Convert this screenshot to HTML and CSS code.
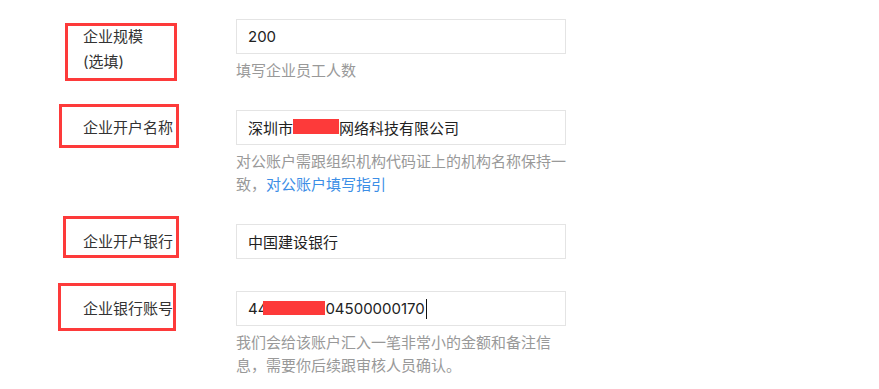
FILE: index.html
```html
<!DOCTYPE html>
<html lang="zh-CN">
<head>
<meta charset="utf-8">
<title>企业信息</title>
<link rel="stylesheet" href="styles.css">
</head>
<body>
<div class="form">
  <div class="row">
    <div class="label">企业规模<br>(选填)</div>
    <div class="field">
      <div class="input">200</div>
      <div class="hint">填写企业员工人数</div>
    </div>
    <div class="mark mark-1"></div>
  </div>

  <div class="row">
    <div class="label">企业开户名称</div>
    <div class="field">
      <div class="input">深圳市<span class="redact redact-name"></span>网络科技有限公司</div>
      <div class="hint">对公账户需跟组织机构代码证上的机构名称保持一致，<a class="link" href="#">对公账户填写指引</a></div>
    </div>
    <div class="mark mark-2"></div>
  </div>

  <div class="row row-nohint">
    <div class="label">企业开户银行</div>
    <div class="field">
      <div class="input">中国建设银行</div>
    </div>
    <div class="mark mark-3"></div>
  </div>

  <div class="row">
    <div class="label">企业银行账号</div>
    <div class="field">
      <div class="input">44<span class="redact redact-num"></span>04500000170<span class="caret"></span></div>
      <div class="hint">我们会给该账户汇入一笔非常小的金额和备注信息，需要你后续跟审核人员确认。</div>
    </div>
    <div class="mark mark-4"></div>
  </div>
</div>
</body>
</html>
```

FILE: styles.css
```css
html, body {
  margin: 0;
  padding: 0;
  background: #ffffff;
}

body {
  font-family: "Inter", "Noto Sans CJK SC", sans-serif;
  font-size: 15px;
  color: #333333;
}

.form {
  padding-top: 19px;
}

.row {
  position: relative;
  display: flex;
  align-items: flex-start;
  margin-bottom: 28px;
}

.row-nohint {
  margin-bottom: 32px;
}

.label {
  box-sizing: border-box;
  width: 236px;
  padding-left: 83px;
  padding-top: 5px;
  line-height: 25px;
  color: #333333;
  white-space: nowrap;
}

.field {
  width: 330px;
}

.input {
  box-sizing: border-box;
  height: 35px;
  border: 1px solid #e4e4e4;
  padding: 0 11px;
  display: flex;
  align-items: center;
  color: #222222;
  white-space: nowrap;
}

.redact {
  display: inline-block;
  background: #fd3a3a;
}

.redact-name {
  width: 46px;
  height: 15px;
  margin-top: -2px;
}

.redact-num {
  width: 62px;
  height: 14px;
  margin-left: -4px;
  margin-top: -1px;
}

.caret {
  display: inline-block;
  width: 1px;
  height: 20px;
  background: #111111;
  margin-left: 1px;
}

.hint {
  margin-top: 5px;
  line-height: 23px;
  color: #999999;
  width: 331px;
}

.link {
  color: #3c8ee6;
  text-decoration: none;
}

.mark {
  position: absolute;
  box-sizing: border-box;
  border: 3px solid #fd3a3a;
}

.mark-1 {
  left: 65px;
  top: 4px;
  width: 112px;
  height: 58px;
}

.mark-2 {
  left: 59px;
  top: -6px;
  width: 120px;
  height: 44px;
}

.mark-3 {
  left: 63px;
  top: -8px;
  width: 116px;
  height: 42px;
}

.mark-4 {
  left: 58px;
  top: -8px;
  width: 118px;
  height: 48px;
}
```
